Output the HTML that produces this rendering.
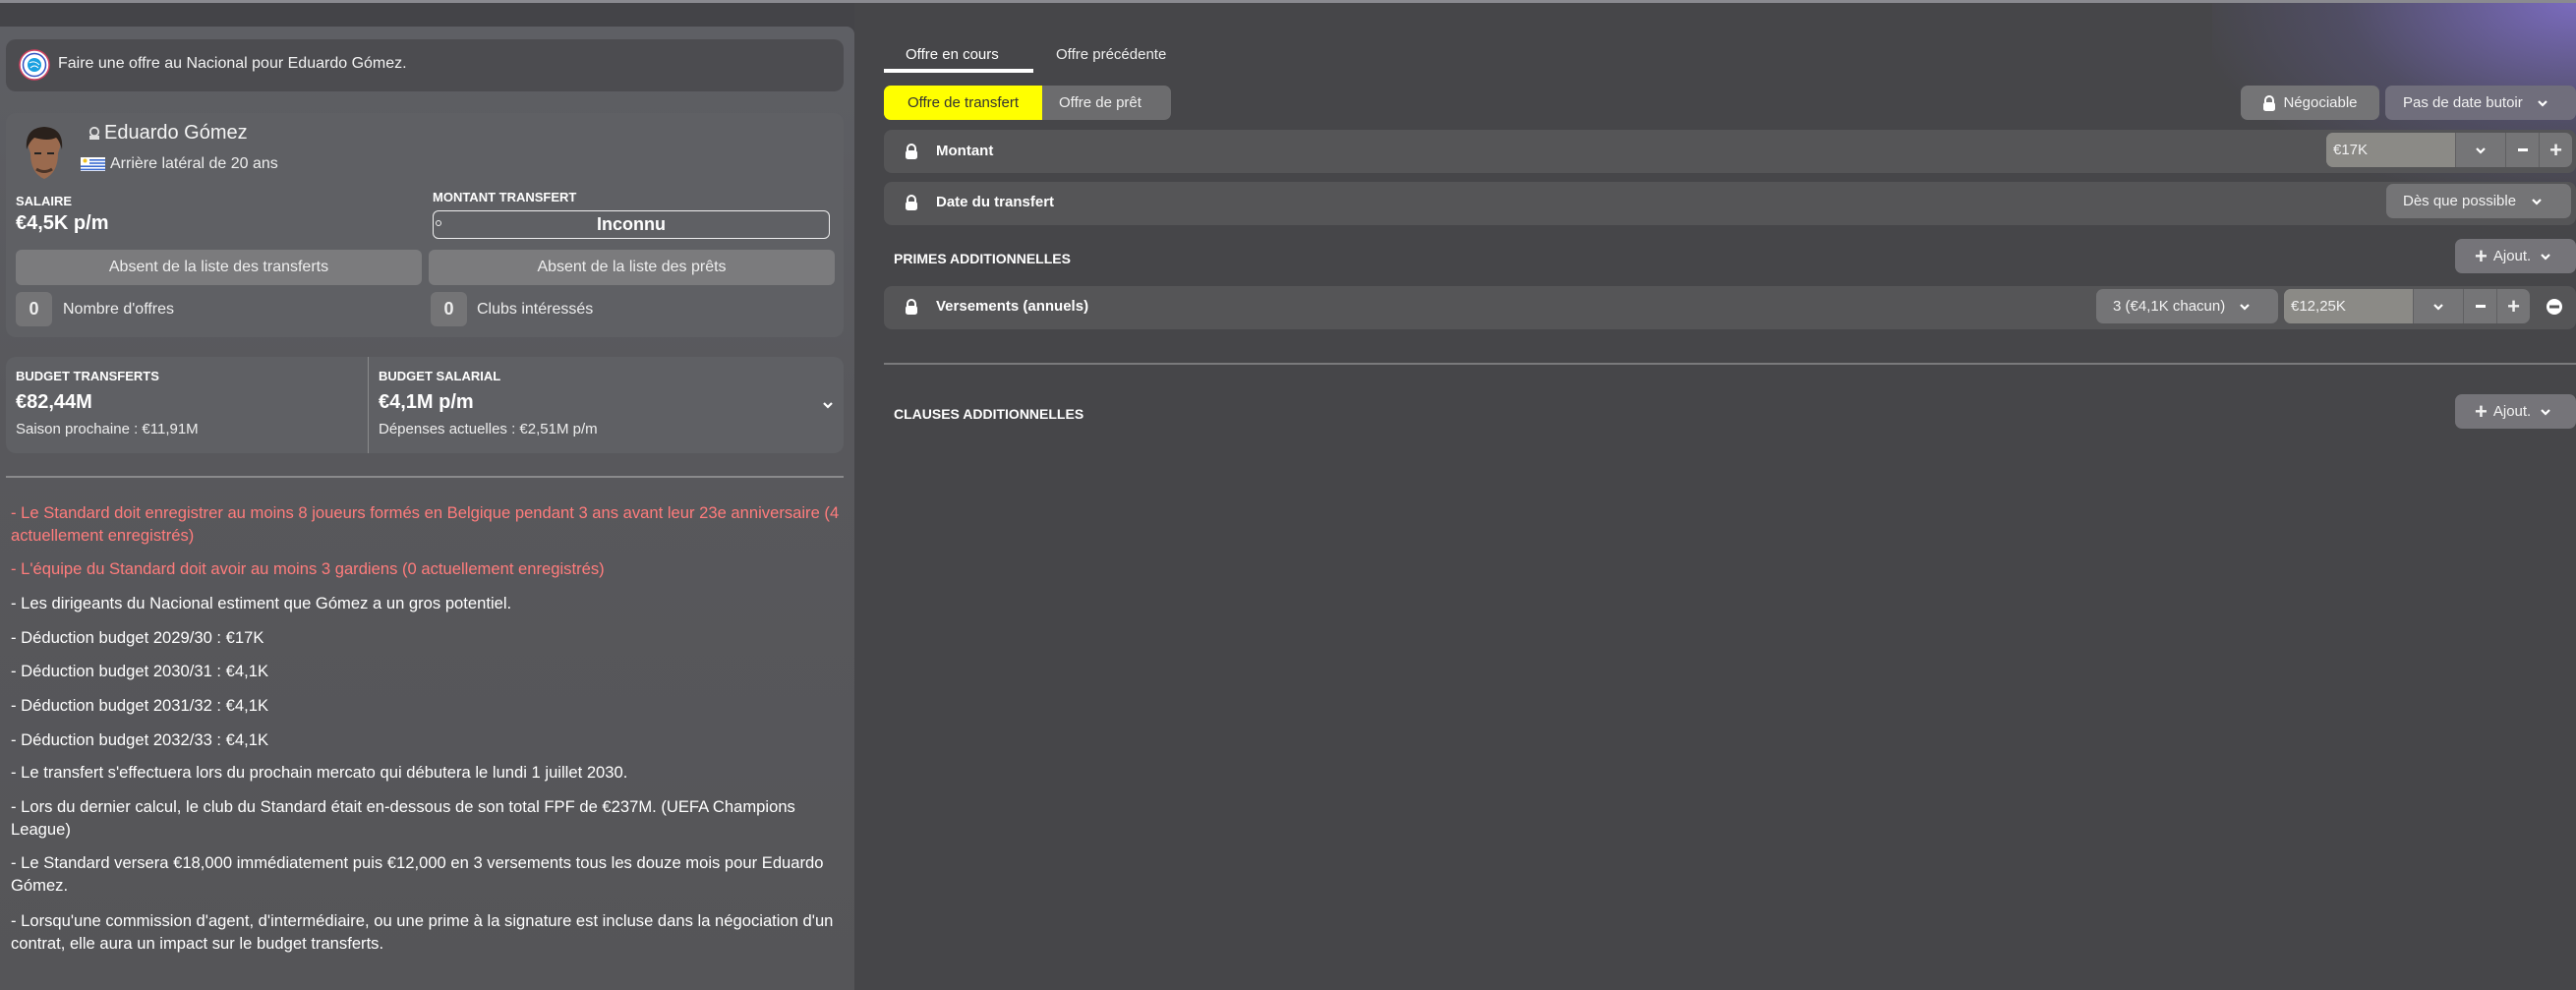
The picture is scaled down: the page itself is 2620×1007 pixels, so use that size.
<!DOCTYPE html>
<html><head><meta charset="utf-8">
<style>
*{box-sizing:border-box;margin:0;padding:0}
body{width:2620px;height:1007px;overflow:hidden;font-family:"Liberation Sans",sans-serif;color:#fff;position:relative;background:#444448}
.a{position:absolute}
#right{left:869px;top:0;width:1751px;height:1007px;background:#464649}
#glow{left:2250px;top:0;width:370px;height:200px;background:radial-gradient(ellipse at 100% 0%,rgba(140,120,230,.75),rgba(110,100,180,.25) 45%,rgba(70,70,73,0) 75%)}
#left{left:0;top:27px;width:869px;height:980px;background:linear-gradient(180deg,#5e5f64 0%,#58585c 40%,#555558 100%);border-top-right-radius:8px}
.box{background:#4b4b4f;border-radius:10px}
.card{background:#5f6064;border-radius:10px}
.t{white-space:nowrap}
.btn{background:#7b7b7d;border-radius:6px;color:#eee;font-size:16px;display:flex;align-items:center;justify-content:center}
.row{background:#555557;border-radius:8px}
.g{background:#747476;border-radius:7px;display:flex;align-items:center;font-size:15px;color:#f2f2f2}
.in{background:#8b8a86}
.lbl{font-size:13px;font-weight:bold}
.note{font-size:16.6px;line-height:23px}
.red{color:#ff7c7c}
</style></head><body>
<div id="right" class="a"></div>
<div id="glow" class="a"></div>
<div id="left" class="a"></div>
<div class="a" style="left:0;top:0;width:2620px;height:3px;background:#8a8a90"></div>

<!-- header -->
<div class="a box" style="left:6px;top:40px;width:852px;height:53px;background:#4c4c50"></div>
<svg class="a" style="left:19px;top:50px" width="32" height="32" viewBox="0 0 32 32"><circle cx="16" cy="16" r="15" fill="#fff" stroke="#d04060" stroke-width="1.5"/><circle cx="16" cy="16" r="11.5" fill="none" stroke="#3050c0" stroke-width="1.5"/><circle cx="16" cy="16" r="7" fill="#1aa0e0"/><path d="M11 14q5-3 10 2M12 19q4-4 8 0" stroke="#fff" stroke-width="1" fill="none"/></svg>
<div class="a t" style="left:59px;top:56px;font-size:16px;color:#f2f2f2">Faire une offre au Nacional pour Eduardo Gómez.</div>

<!-- player card -->
<div class="a card" style="left:6px;top:115px;width:852px;height:228px"></div>
<svg class="a" style="left:23px;top:128px" width="44" height="56" viewBox="0 0 44 56"><path d="M6 22q-2-18 16-20q18 0 16 20l-2 6q0 20-14 26q-14-6-14-26z" fill="#9a6a4e"/><path d="M4 24q-2-22 18-23q20 1 18 23q-3-10-6-12q-8 4-22 0q-5 4-8 12z" fill="#2a211c"/><path d="M12 28h7M25 28h7" stroke="#222" stroke-width="2"/><path d="M14 44q8 5 16 0" stroke="#4a3428" stroke-width="3" fill="none"/></svg>
<svg class="a" style="left:90px;top:128px" width="12" height="14" viewBox="0 0 12 14"><circle cx="6" cy="6" r="4.2" fill="none" stroke="#ddd" stroke-width="1.8"/><path d="M1 14v-4h10v4" fill="#ddd"/></svg>
<div class="a t" style="left:106px;top:124px;font-size:20px;color:#f4f4f4">Eduardo Gómez</div>
<svg class="a" style="left:82px;top:160px" width="25" height="14" viewBox="0 0 25 14"><rect width="25" height="14" fill="#fff"/><rect y="2" width="25" height="1.6" fill="#3a6ad0"/><rect y="5.2" width="25" height="1.6" fill="#3a6ad0"/><rect y="8.4" width="25" height="1.6" fill="#3a6ad0"/><rect y="11.6" width="25" height="1.6" fill="#3a6ad0"/><rect width="9" height="7" fill="#fff"/><circle cx="4.5" cy="3.5" r="2" fill="#f0c020"/></svg>
<div class="a t" style="left:112px;top:158px;font-size:16px;color:#eee">Arrière latéral de 20 ans</div>
<div class="a t lbl" style="left:16px;top:197px">SALAIRE</div>
<div class="a t" style="left:16px;top:216px;font-size:20px;font-weight:bold">€4,5K p/m</div>
<div class="a t lbl" style="left:440px;top:193px">MONTANT TRANSFERT</div>
<div class="a" style="left:440px;top:214px;width:404px;height:29px;border:1.5px solid #eee;border-radius:6px;display:flex;align-items:center;justify-content:center;font-weight:bold;font-size:18px">Inconnu</div>
<div class="a" style="left:443px;top:224px;width:6px;height:6px;border:1px solid #eee;border-radius:50%"></div>
<div class="a btn" style="left:16px;top:254px;width:413px;height:36px">Absent de la liste des transferts</div>
<div class="a btn" style="left:436px;top:254px;width:413px;height:36px">Absent de la liste des prêts</div>
<div class="a btn" style="left:16px;top:297px;width:37px;height:35px;font-weight:bold;font-size:18px;background:#747476">0</div>
<div class="a t" style="left:64px;top:306px;font-size:16px;color:#eee">Nombre d'offres</div>
<div class="a btn" style="left:438px;top:297px;width:37px;height:35px;font-weight:bold;font-size:18px;background:#747476">0</div>
<div class="a t" style="left:485px;top:306px;font-size:16px;color:#eee">Clubs intéressés</div>

<!-- budgets -->
<div class="a card" style="left:6px;top:363px;width:852px;height:98px"></div>
<div class="a" style="left:374px;top:363px;width:1px;height:98px;background:#8a8a8c"></div>
<div class="a t lbl" style="left:16px;top:375px">BUDGET TRANSFERTS</div>
<div class="a t" style="left:16px;top:398px;font-size:20px;font-weight:bold">€82,44M</div>
<div class="a t" style="left:16px;top:428px;font-size:15px;color:#eee">Saison prochaine : €11,91M</div>
<div class="a t lbl" style="left:385px;top:375px">BUDGET SALARIAL</div>
<div class="a t" style="left:385px;top:398px;font-size:20px;font-weight:bold">€4,1M p/m</div>
<div class="a t" style="left:385px;top:428px;font-size:15px;color:#eee">Dépenses actuelles : €2,51M p/m</div>
<svg class="a" style="left:836px;top:407px" width="12" height="10" viewBox="0 0 12 10"><path d="M2 3l4 4 4-4" stroke="#fff" stroke-width="2.2" fill="none"/></svg>

<div class="a" style="left:6px;top:484px;width:852px;height:2px;background:#8a8a8c"></div>

<!-- notes -->
<div class="a note t red" style="left:11px;top:510px">- Le Standard doit enregistrer au moins 8 joueurs formés en Belgique pendant 3 ans avant leur 23e anniversaire (4<br>actuellement enregistrés)</div>
<div class="a note t red" style="left:11px;top:567px">- L'équipe du Standard doit avoir au moins 3 gardiens (0 actuellement enregistrés)</div>
<div class="a note t" style="left:11px;top:602px">- Les dirigeants du Nacional estiment que Gómez a un gros potentiel.</div>
<div class="a note t" style="left:11px;top:637px">- Déduction budget 2029/30 : €17K</div>
<div class="a note t" style="left:11px;top:671px">- Déduction budget 2030/31 : €4,1K</div>
<div class="a note t" style="left:11px;top:706px">- Déduction budget 2031/32 : €4,1K</div>
<div class="a note t" style="left:11px;top:741px">- Déduction budget 2032/33 : €4,1K</div>
<div class="a note t" style="left:11px;top:774px">- Le transfert s'effectuera lors du prochain mercato qui débutera le lundi 1 juillet 2030.</div>
<div class="a note t" style="left:11px;top:809px">- Lors du dernier calcul, le club du Standard était en-dessous de son total FPF de €237M. (UEFA Champions<br>League)</div>
<div class="a note t" style="left:11px;top:866px">- Le Standard versera €18,000 immédiatement puis €12,000 en 3 versements tous les douze mois pour Eduardo<br>Gómez.</div>
<div class="a note t" style="left:11px;top:925px">- Lorsqu'une commission d'agent, d'intermédiaire, ou une prime à la signature est incluse dans la négociation d'un<br>contrat, elle aura un impact sur le budget transferts.</div>

<!-- right: tabs -->
<div class="a t" style="left:921px;top:47px;font-size:15px">Offre en cours</div>
<div class="a t" style="left:1074px;top:47px;font-size:15px;color:#eee">Offre précédente</div>
<div class="a" style="left:899px;top:70px;width:152px;height:4px;background:#fff"></div>
<div class="a" style="left:899px;top:87px;width:292px;height:35px;background:#6c6c6e;border-radius:7px"></div>
<div class="a" style="left:899px;top:87px;width:161px;height:35px;background:#ffff00;border-radius:7px 0 0 7px;color:#333;font-size:15px;display:flex;align-items:center;justify-content:center">Offre de transfert</div>
<div class="a t" style="left:1077px;top:96px;font-size:15px;color:#f0f0f0">Offre de prêt</div>

<div class="a g" style="left:2279px;top:87px;width:141px;height:35px;justify-content:center"><svg width="14" height="16" viewBox="0 0 14 16" style="margin-right:7px"><path d="M3 8V5a4 4 0 0 1 8 0v3" stroke="#fff" stroke-width="2" fill="none"/><rect x="1" y="7" width="12" height="9" rx="2.5" fill="#fff"/></svg>Négociable</div>
<div class="a g" style="left:2426px;top:87px;width:194px;height:35px;padding-left:18px;background:#706e7c">Pas de date butoir<svg width="12" height="10" viewBox="0 0 12 10" style="margin-left:14px"><path d="M2 3l4 4 4-4" stroke="#fff" stroke-width="2.2" fill="none"/></svg></div>

<!-- rows -->
<div class="a row" style="left:899px;top:132px;width:1721px;height:44px"></div>
<div class="a row" style="left:899px;top:185px;width:1721px;height:44px"></div>
<div class="a row" style="left:899px;top:291px;width:1721px;height:44px"></div>

<svg class="a" style="left:920px;top:146px" width="14" height="16" viewBox="0 0 14 16"><path d="M3 8V5a4 4 0 0 1 8 0v3" stroke="#fff" stroke-width="2" fill="none"/><rect x="1" y="7" width="12" height="9" rx="2.5" fill="#fff"/></svg>
<div class="a t" style="left:952px;top:145px;font-size:15px;font-weight:bold">Montant</div>
<svg class="a" style="left:920px;top:198px" width="14" height="16" viewBox="0 0 14 16"><path d="M3 8V5a4 4 0 0 1 8 0v3" stroke="#fff" stroke-width="2" fill="none"/><rect x="1" y="7" width="12" height="9" rx="2.5" fill="#fff"/></svg>
<div class="a t" style="left:952px;top:197px;font-size:15px;font-weight:bold">Date du transfert</div>
<svg class="a" style="left:920px;top:304px" width="14" height="16" viewBox="0 0 14 16"><path d="M3 8V5a4 4 0 0 1 8 0v3" stroke="#fff" stroke-width="2" fill="none"/><rect x="1" y="7" width="12" height="9" rx="2.5" fill="#fff"/></svg>
<div class="a t" style="left:952px;top:303px;font-size:15px;font-weight:bold">Versements (annuels)</div>

<!-- montant controls -->
<div class="a g" style="left:2366px;top:135px;width:250px;height:35px;overflow:hidden;background:#757577">
 <div class="in" style="width:131px;height:100%;display:flex;align-items:center;padding-left:7px">€17K</div>
 <div style="width:51px;height:100%;border-left:1px solid #606062;display:flex;align-items:center;justify-content:center"><svg width="12" height="10" viewBox="0 0 12 10"><path d="M2 3l4 4 4-4" stroke="#fff" stroke-width="2.2" fill="none"/></svg></div>
 <div style="width:34px;height:100%;border-left:1px solid #606062;display:flex;align-items:center;justify-content:center"><div style="width:10px;height:3px;background:#fff"></div></div>
 <div style="width:34px;height:100%;border-left:1px solid #606062;display:flex;align-items:center;justify-content:center;font-size:22px;font-weight:bold">+</div>
</div>
<div class="a g" style="left:2427px;top:187px;width:188px;height:35px;padding-left:17px">Dès que possible<svg width="12" height="10" viewBox="0 0 12 10" style="margin-left:15px"><path d="M2 3l4 4 4-4" stroke="#fff" stroke-width="2.2" fill="none"/></svg></div>

<div class="a t" style="left:909px;top:255px;font-size:14px;font-weight:bold">PRIMES ADDITIONNELLES</div>
<div class="a g" style="left:2497px;top:243px;width:123px;height:35px;padding-left:20px;background:#757479"><span style="font-size:22px;font-weight:bold;margin-right:6px">+</span>Ajout.<svg width="12" height="10" viewBox="0 0 12 10" style="margin-left:9px"><path d="M2 3l4 4 4-4" stroke="#fff" stroke-width="2.2" fill="none"/></svg></div>

<div class="a g" style="left:2132px;top:294px;width:185px;height:35px;padding-left:17px">3 (€4,1K chacun)<svg width="12" height="10" viewBox="0 0 12 10" style="margin-left:14px"><path d="M2 3l4 4 4-4" stroke="#fff" stroke-width="2.2" fill="none"/></svg></div>
<div class="a g" style="left:2323px;top:294px;width:250px;height:35px;overflow:hidden;background:#757577">
 <div class="in" style="width:131px;height:100%;display:flex;align-items:center;padding-left:7px">€12,25K</div>
 <div style="width:51px;height:100%;border-left:1px solid #606062;display:flex;align-items:center;justify-content:center"><svg width="12" height="10" viewBox="0 0 12 10"><path d="M2 3l4 4 4-4" stroke="#fff" stroke-width="2.2" fill="none"/></svg></div>
 <div style="width:34px;height:100%;border-left:1px solid #606062;display:flex;align-items:center;justify-content:center"><div style="width:10px;height:3px;background:#fff"></div></div>
 <div style="width:34px;height:100%;border-left:1px solid #606062;display:flex;align-items:center;justify-content:center;font-size:22px;font-weight:bold">+</div>
</div>
<svg class="a" style="left:2589px;top:303px" width="18" height="18" viewBox="0 0 18 18"><circle cx="9" cy="9" r="8" fill="#fff"/><rect x="4" y="7.5" width="10" height="3" fill="#555"/></svg>

<div class="a" style="left:899px;top:369px;width:1721px;height:2px;background:#7a7a7c"></div>
<div class="a t" style="left:909px;top:413px;font-size:14px;font-weight:bold">CLAUSES ADDITIONNELLES</div>
<div class="a g" style="left:2497px;top:401px;width:123px;height:35px;padding-left:20px;background:#757479"><span style="font-size:22px;font-weight:bold;margin-right:6px">+</span>Ajout.<svg width="12" height="10" viewBox="0 0 12 10" style="margin-left:9px"><path d="M2 3l4 4 4-4" stroke="#fff" stroke-width="2.2" fill="none"/></svg></div>
</body></html>
